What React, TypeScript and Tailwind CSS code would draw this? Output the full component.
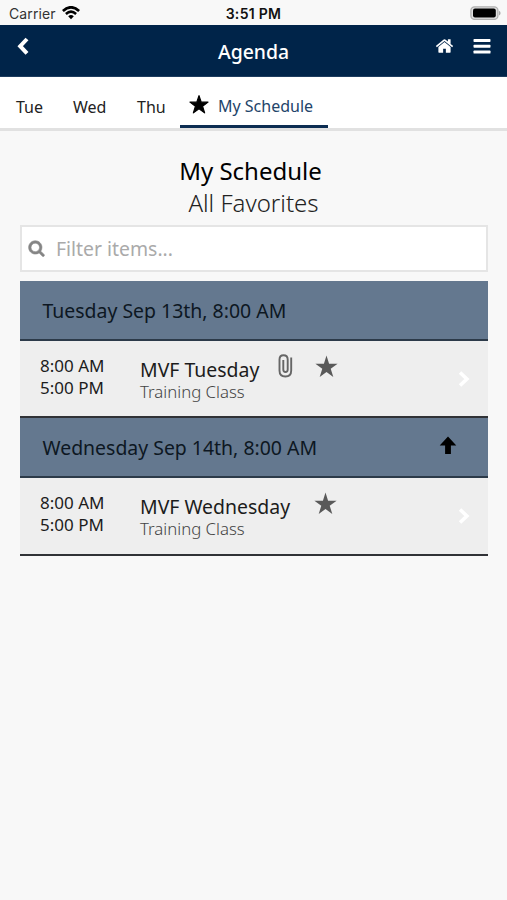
import type { ReactNode } from "react";

const STAR = "12,0.8 14.8,9 23.4,9 16.5,14.1 19.1,22.6 12,17.5 4.9,22.6 7.5,14.1 0.6,9 9.2,9";

function Wifi() {
  return (
    <svg className="ml-[6px] mt-[6px] h-[14px] w-[18px]" viewBox="0 0 18 14" fill="none" stroke="#000">
      <path d="M0.9 5 Q9 -2.4 17.1 5" strokeWidth="2.7" />
      <path d="M3.9 8 Q9 3.2 14.1 8" strokeWidth="2.5" />
      <path d="M6.2 10.3 Q9 7.7 11.8 10.3 L9 13.2 Z" fill="#000" stroke="none" />
    </svg>
  );
}

function StatusBar() {
  return (
    <div className="grid h-[25px] grid-cols-3 font-['Inter','Liberation_Sans',sans-serif] leading-[27px] text-[#111]">
      <div className="flex pl-[9px]">
        <span className="text-[14px] text-[#333] tracking-[0.1px]">Carrier</span>
        <Wifi />
      </div>
      <div className="text-center text-[14px] font-semibold tracking-[0.3px]">3:51 PM</div>
      <div className="flex justify-end pt-[6px] pr-[6px]">
        <svg className="h-[14px] w-[31px]" viewBox="0 0 31 14">
          <rect x="0.9" y="0.8" width="27" height="12.6" rx="3.6" fill="#e0e0e0" stroke="#b0b0b0" strokeWidth="1.3" />
          <rect x="3" y="2.6" width="22.8" height="9" rx="2" fill="#000" />
          <path d="M29 4.8 Q30.6 5.4 30.6 7.1 Q30.6 8.8 29 9.4 Z" fill="#aaa" />
        </svg>
      </div>
    </div>
  );
}

function Header() {
  return (
    <header className="grid h-[52px] grid-cols-3 border-b border-[#1d3c5e] bg-[#002449] text-white">
      <svg className="ml-[17px] mt-[12px] h-[18px] w-[12px]" viewBox="0 0 12 18" fill="none" stroke="#fff" strokeWidth="4">
        <path d="M10 2 L3.2 9.2 L10 16.4" />
      </svg>
      <h1 className="pt-[13px] text-center text-[19.4px] leading-[28px] font-medium">Agenda</h1>
      <div className="flex justify-end pr-[16px]">
        <svg className="mt-[11px] h-[20px] w-[19px]" viewBox="0 0 1792 1792" fill="#fff">
          <path d="M1472 992v480q0 26-19 45t-45 19h-384v-384h-256v384h-384q-26 0-45-19t-19-45v-480q0-1 .5-3t.5-3l575-474 575 474q1 2 1 6zm223-69l-62 74q-8 9-21 11h-3q-13 0-21-7l-692-577-692 577q-12 8-24 7-13-2-21-11l-62-74q-8-10-7-23.500t11-21.500l719-599q32-26 76-26t76 26l244 204v-195q0-14 9-23t23-9h192q14 0 23 9t9 23v408l219 182q10 8 11 21.500t-7 23.500z" />
        </svg>
        <svg className="mt-[14px] ml-[19px] h-[15px] w-[18px]" viewBox="0 0 18 15" fill="#fff">
          <rect x="0.500" y="0" width="17" height="3" rx="0.7" />
          <rect x="0.500" y="5.800" width="17" height="3" rx="0.7" />
          <rect x="0.500" y="11.600" width="17" height="3" rx="0.7" />
        </svg>
      </div>
    </header>
  );
}

function Tabs() {
  return (
    <nav className="flex h-[54px] border-b-[3px] border-[#e1e1e1] bg-white text-[16px] leading-[24px] text-[#222]">
      <span className="ml-[16px] w-[57px] pt-[18px]">Tue</span>
      <span className="w-[64px] pt-[18px]">Wed</span>
      <span className="w-[43px] pt-[18px]">Thu</span>
      <div className="flex h-[51px] w-[148px] border-b-[3px] border-[#0c2d52] pl-[9px] text-[#23446a]">
        <svg className="mt-[18px] h-[19px] w-[20px]" viewBox="0 0 24 24" fill="#000" stroke="#000" strokeWidth="1.500" strokeLinejoin="round">
          <polygon points={STAR} />
        </svg>
        <span className="ml-[9px] pt-[17px] whitespace-nowrap">My Schedule</span>
      </div>
    </nav>
  );
}

function DayHeader({ label, children }: { label: string; children?: ReactNode }) {
  return (
    <div className="flex h-[60px] justify-between border-b-2 border-[#2c3a49] bg-[#64788f] pr-[31px] pl-[22.500px]">
      <span className="pt-[16px] text-[19.45px] leading-[28px] text-[#0d1722]">{label}</span>
      {children}
    </div>
  );
}

function Session({ title, clip }: { title: string; clip?: boolean }) {
  return (
    <div className="flex h-[77px] border-b-2 border-[#303236] bg-[#eeeeee] pl-[20px] text-[#1c1c1c] last:h-[78px]">
      <div className="w-[100px] pt-[14px] text-[17px] leading-[22px]">
        <div>8:00 AM</div>
        <div>5:00 PM</div>
      </div>
      <div className="flex-1 pt-[14px]">
        <div className="flex h-[26px]">
          <span className="pt-[4px] text-[19.45px] leading-[22px]">{title}</span>
          {clip && (
            <svg className="-mt-px ml-[18.500px] h-[24px] w-[15px]" viewBox="0 0 15 24" fill="none" stroke="#666" strokeWidth="1.900">
              <path d="M13.200 3.500 V16.500 Q13.200 22.500 7.400 22.500 Q1.500 22.500 1.500 16.500 V5.500 Q1.500 1.200 5.500 1.200 Q9.700 1.200 9.700 5.500 V15.500 Q9.700 18 7.500 18 Q5.300 18 5.300 15.500 V6" />
            </svg>
          )}
          <svg className={clip ? "ml-[22.500px] h-[23px] w-[23px]" : "ml-[24px] h-[23px] w-[23px]"} viewBox="0 0 24 24" fill="#595959">
            <polygon points="12,0.500 14.700,9 23.600,9 16.400,14.300 19.100,23 12,17.700 4.900,23 7.600,14.300 0.400,9 9.300,9" />
          </svg>
        </div>
        <div className="text-[16.8px] leading-[22px] font-light text-[#444]">Training Class</div>
      </div>
      <svg className="mt-[30px] mr-[18px] h-[16px] w-[12px]" viewBox="0 0 12 16" fill="none" stroke="#fff" strokeWidth="3.600">
        <path d="M2 1.500 L8.900 8 L2 14.500" />
      </svg>
    </div>
  );
}

export default function App() {
  return (
    <div className="h-[900px] w-[507px] overflow-hidden bg-[#f8f8f8] font-['Noto_Sans','Open_Sans',sans-serif]">
      <StatusBar />
      <Header />
      <Tabs />
      <main className="pr-[19px] pl-[20px]">
        <div className="pt-[24px] pr-[7px] text-center">
          <h2 className="text-[24px] leading-[32px] text-black">My Schedule</h2>
          <h3 className="pl-[6px] text-[24px] leading-[32px] font-light text-[#222]">All Favorites</h3>
        </div>
        <div className="mt-[6px] flex h-[47px] border-2 border-[#e5e5e5] bg-white pl-[6px]">
          <svg className="mt-[12px] h-[18px] w-[17px]" viewBox="0 0 1792 1792" fill="#858585" stroke="#858585" strokeWidth="60">
            <path d="M1216 832q0-185-131.500-316.500t-316.500-131.500-316.500 131.500-131.500 316.500 131.500 316.500 316.500 131.500 316.500-131.500 131.500-316.500zm512 832q0 52-38 90t-90 38q-54 0-90-38l-343-342q-179 124-399 124-143 0-273.500-55.500t-225-150-150-225-55.500-273.500 55.500-273.500 150-225 225-150 273.500-55.500 273.500 55.500 225 150 150 225 55.500 273.500q0 220-124 399l343 343q37 37 37 90z" />
          </svg>
          <span className="ml-[11px] pt-[8px] text-[19.4px] leading-[28px] text-[#aaa]">Filter items...</span>
        </div>
        <section className="mt-[9px]">
          <DayHeader label="Tuesday Sep 13th, 8:00 AM" />
          <Session title="MVF Tuesday" clip />
          <DayHeader label="Wednesday Sep 14th, 8:00 AM">
            <svg className="mt-[18px] h-[19px] w-[18px]" viewBox="0 0 18 19" fill="#000">
              <path d="M9 0.500 L17.300 9.500 H11.900 V18 H6.100 V9.500 H0.700 Z" />
            </svg>
          </DayHeader>
          <Session title="MVF Wednesday" />
        </section>
      </main>
    </div>
  );
}
